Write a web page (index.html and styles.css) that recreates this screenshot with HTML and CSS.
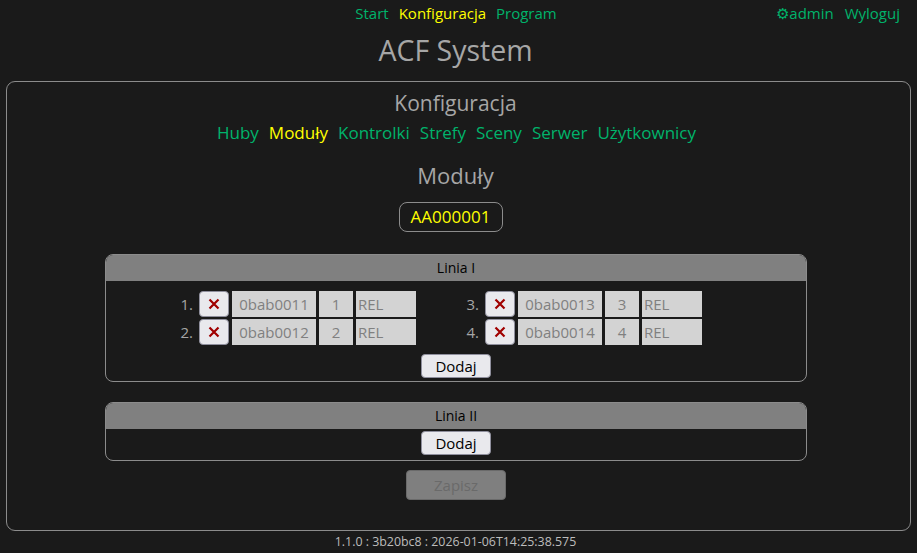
FILE: index.html
```html
<!DOCTYPE html>
<html lang="pl">
<head>
<meta charset="utf-8">
<title>ACF System</title>
<link rel="stylesheet" href="styles.css">
</head>
<body>
<header class="topbar">
  <div class="topbar-side"></div>
  <nav class="topnav">
    <a class="link">Start</a>
    <a class="link active">Konfiguracja</a>
    <a class="link">Program</a>
  </nav>
  <div class="topbar-side user">
    <a class="link"><span class="gear">⚙</span>admin</a>
    <a class="link">Wyloguj</a>
  </div>
</header>
<h1 class="title">ACF System</h1>
<main class="main">
  <h2 class="section-title">Konfiguracja</h2>
  <nav class="subnav">
    <a class="link">Huby</a>
    <a class="link active">Moduły</a>
    <a class="link">Kontrolki</a>
    <a class="link">Strefy</a>
    <a class="link">Sceny</a>
    <a class="link">Serwer</a>
    <a class="link">Użytkownicy</a>
  </nav>
  <h3 class="page-title">Moduły</h3>
  <div class="badge-row"><span class="badge">AA000001</span></div>

  <section class="panel">
    <div class="panel-head">Linia I</div>
    <div class="panel-body">
      <div class="grid">
        <div class="item"><span class="num">1.</span><button class="del"><svg viewBox="0 0 12 12" width="12" height="12"><path d="M1.5 1.5L10.5 10.5M10.5 1.5L1.5 10.5"/></svg></button><span class="field addr">0bab0011</span><span class="field idx">1</span><span class="field type">REL</span></div>
        <div class="item"><span class="num">3.</span><button class="del"><svg viewBox="0 0 12 12" width="12" height="12"><path d="M1.5 1.5L10.5 10.5M10.5 1.5L1.5 10.5"/></svg></button><span class="field addr">0bab0013</span><span class="field idx">3</span><span class="field type">REL</span></div>
        <div class="item"><span class="num">2.</span><button class="del"><svg viewBox="0 0 12 12" width="12" height="12"><path d="M1.5 1.5L10.5 10.5M10.5 1.5L1.5 10.5"/></svg></button><span class="field addr">0bab0012</span><span class="field idx">2</span><span class="field type">REL</span></div>
        <div class="item"><span class="num">4.</span><button class="del"><svg viewBox="0 0 12 12" width="12" height="12"><path d="M1.5 1.5L10.5 10.5M10.5 1.5L1.5 10.5"/></svg></button><span class="field addr">0bab0014</span><span class="field idx">4</span><span class="field type">REL</span></div>
      </div>
      <button class="btn">Dodaj</button>
    </div>
  </section>

  <section class="panel panel-empty">
    <div class="panel-head">Linia II</div>
    <div class="panel-body">
      <button class="btn">Dodaj</button>
    </div>
  </section>

  <div class="save-row"><button class="save" disabled>Zapisz</button></div>
</main>
<footer class="footer">1.1.0 : 3b20bc8 : 2026-01-06T14:25:38.575</footer>
</body>
</html>
```
FILE: styles.css
```css
* { box-sizing: border-box; }
html, body { height: 100%; }
body {
  margin: 0;
  background: #1a1a1a;
  font-family: "Open Sans", "Noto Sans", sans-serif;
  color: #a6a6a6;
}
.link { color: #00b36b; text-decoration: none; cursor: pointer; }
.link.active { color: #ffff00; }

.topbar {
  display: grid;
  grid-template-columns: 1fr auto 1fr;
  height: 25px;
  align-items: center;
  font-size: 15px;
}
.topnav { display: flex; gap: 10px; margin-right: 5px; }
.user { display: flex; justify-content: flex-end; gap: 11px; padding-right: 17px; }
.gear { font-size: 15px; }

.title {
  margin: 7px 0 0;
  text-align: center;
  font-size: 28.5px;
  font-weight: 400;
  line-height: 36px;
  color: #a6a6a6;
  padding-right: 6px;
}

.main {
  margin: 13px 6px 0;
  height: 450px;
  border: 1px solid #8c8c8c;
  border-radius: 9px;
  padding-top: 6px;
}
.section-title {
  margin: 0;
  text-align: center;
  font-size: 21px;
  font-weight: 400;
  line-height: 30px;
  padding-right: 6px;
}
.subnav {
  display: flex;
  justify-content: center;
  gap: 10px;
  font-size: 17px;
  line-height: 22px;
  margin-top: 4px;
  padding-right: 4px;
}
.page-title {
  margin: 16px 0 0;
  text-align: center;
  font-size: 22px;
  font-weight: 400;
  line-height: 30px;
  padding-right: 6px;
}
.badge-row { display: flex; justify-content: center; margin-top: 12px; padding-right: 16px; }
.badge {
  border: 1px solid #8c8c8c;
  border-radius: 8px;
  color: #ffff00;
  font-size: 17px;
  line-height: 28px;
  width: 104px;
  text-align: center;
}

.panel {
  width: 702px;
  margin: 22px 0 0 98px;
  border: 1px solid #8c8c8c;
  border-radius: 8px;
  overflow: hidden;
}
.panel-empty { margin-top: 20px; }
.panel-head {
  background: #808080;
  color: #000;
  text-align: center;
  font-size: 14px;
  line-height: 26px;
  height: 26px;
}
.panel-body {
  display: flex;
  flex-direction: column;
  align-items: center;
  padding: 10px 0 3px;
}
.panel-empty .panel-body { padding: 2px 0 5px; }
.grid {
  align-self: flex-start;
  margin-left: 24px;
  display: grid;
  grid-template-columns: 286px 286px;
  row-gap: 2px;
  margin-bottom: 9px;
}
.item {
  display: flex;
  justify-content: flex-end;
  align-items: center;
  gap: 3px;
}
.num { font-size: 15px; color: #a6a6a6; margin-right: 3px; }
.del {
  width: 30px;
  height: 26px;
  padding: 0;
  background: #e9e9ed;
  border: 1px solid #8f8f9d;
  border-radius: 4px;
  display: flex;
  align-items: center;
  justify-content: center;
}
.del svg { stroke: #a00000; stroke-width: 2.2; fill: none; }
.field {
  background: #d3d3d3;
  color: #808080;
  height: 26px;
  line-height: 26px;
  font-size: 15px;
  text-align: center;
}
.addr { width: 84px; }
.idx { width: 34px; }
.type { width: 60px; text-align: left; padding-left: 2px; }

.btn {
  width: 70px;
  height: 24px;
  padding: 0;
  background: #e9e9ed;
  border: 1px solid #8f8f9d;
  border-radius: 4px;
  font-family: inherit;
  font-size: 15px;
  color: #000;
}

.save-row { display: flex; justify-content: center; margin-top: 9px; padding-right: 5px; }
.save {
  width: 100px;
  height: 30px;
  padding: 0;
  background: #7f7f7f;
  border: 1px solid #6a6a6a;
  border-radius: 4px;
  color: #6a6a6a;
  font-family: inherit;
  font-size: 15px;
}

.footer {
  text-align: center;
  font-size: 12.4px;
  color: #bdbdbd;
  line-height: 22px;
  padding-right: 6px;
}
```
